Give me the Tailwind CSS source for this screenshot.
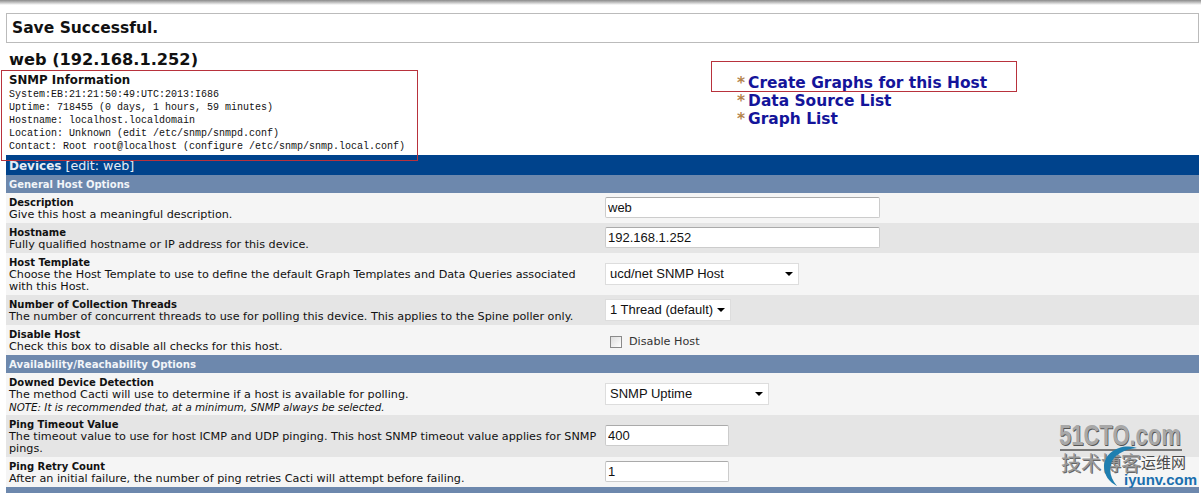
<!DOCTYPE html>
<html lang="en">
<head>
  <meta charset="UTF-8" />
  <title>Devices - Cacti</title>
  <script src="https://cdn.jsdelivr.net/npm/@tailwindcss/browser@4"></script>
</head>
<body class="relative h-[493px] w-[1201px] overflow-hidden bg-white font-['DejaVu_Sans',sans-serif] text-[11.2px] leading-[12px] text-[#111]">
  <div class="h-[5px] bg-gradient-to-b from-[#8a8a8a] to-white"></div>

  <div class="mx-[6px] mt-[8px] mr-[2px] flex h-[30px] items-center border border-[#bbb] pl-[5px] text-[15.5px] font-bold">Save Successful.</div>

  <!-- host info + links -->
  <div class="ml-[9px] flex h-[112px]">
    <div class="w-[728px]">
      <h1 class="mt-[6px] text-[16.2px] leading-[22px] font-bold">web (192.168.1.252)</h1>
      <h2 class="mt-[2px] text-[11.8px] leading-[14px] font-bold">SNMP Information</h2>
      <div class="mt-[1px] font-['Liberation_Mono',monospace] text-[10px] leading-[13px]">
        <p>System:EB:21:21:50:49:UTC:2013:I686</p>
        <p>Uptime: 718455 (0 days, 1 hours, 59 minutes)</p>
        <p>Hostname: localhost.localdomain</p>
        <p>Location: Unknown (edit /etc/snmp/snmpd.conf)</p>
        <p>Contact: Root root@localhost (configure /etc/snmp/snmp.local.conf)</p>
      </div>
    </div>
    <ul class="mt-[31px] text-[15.45px] leading-[18px] font-bold text-[#14149a]">
      <li><span class="mr-[3px] text-[#b5844c]">*</span>Create Graphs for this Host</li>
      <li><span class="mr-[3px] text-[#b5844c]">*</span>Data Source List</li>
      <li><span class="mr-[3px] text-[#b5844c]">*</span>Graph List</li>
    </ul>
  </div>

  <div class="ml-[6px] mr-[2px]">
    <div class="flex h-[20px] items-center bg-[#00438c] pt-[1px] pl-[3px] text-[12.7px] text-[#e5ecf5]"><b class="text-[12px]">Devices</b>&nbsp;[edit: web]</div>
    <div class="flex h-[18px] items-center bg-[#6d88ad] pt-[1px] pl-[3px] text-[10px] font-bold text-[#f2f5f9]">General Host Options</div>

    <div class="grid h-[30px] grid-cols-[596px_1fr] bg-[#f5f5f5] pl-[3px] pt-[4px]">
      <div><b class="block text-[10px]">Description</b>Give this host a meaningful description.</div>
      <input value="web" class="h-[21px] w-[275px] rounded-[2px] border border-[#ccc] border-t-[#aaa] bg-white pl-[2px] font-['Liberation_Sans',sans-serif] text-[13px]" />
    </div>
    <div class="grid h-[30px] grid-cols-[596px_1fr] bg-[#e5e5e5] pl-[3px] pt-[4px]">
      <div><b class="block text-[10px]">Hostname</b>Fully qualified hostname or IP address for this device.</div>
      <input value="192.168.1.252" class="h-[21px] w-[275px] rounded-[2px] border border-[#ccc] border-t-[#aaa] bg-white pl-[2px] font-['Liberation_Sans',sans-serif] text-[13px]" />
    </div>
    <div class="grid h-[42px] grid-cols-[596px_1fr] items-start bg-[#f5f5f5] pl-[3px] pt-[4px]">
      <div class="pr-[4px]"><b class="block text-[10px]">Host Template</b>Choose the Host Template to use to define the default Graph Templates and Data Queries associated with this Host.</div>
      <div class="mt-[6px] flex h-[22px] w-[194px] items-center justify-between border border-[#ddd] bg-white pr-[5px] pl-[4px] font-['Liberation_Sans',sans-serif] text-[13px]">ucd/net SNMP Host<span class="h-0 w-0 border-x-[4px] border-t-[4px] border-x-transparent border-t-black"></span></div>
    </div>
    <div class="grid h-[30px] grid-cols-[596px_1fr] items-start bg-[#e5e5e5] pl-[3px] pt-[4px]">
      <div><b class="block text-[10px]">Number of Collection Threads</b>The number of concurrent threads to use for polling this device. This applies to the Spine poller only.</div>
      <div class="flex h-[22px] w-[126px] items-center justify-between border border-[#ddd] bg-white pr-[5px] pl-[4px] font-['Liberation_Sans',sans-serif] text-[13px]">1 Thread (default)<span class="h-0 w-0 border-x-[4px] border-t-[4px] border-x-transparent border-t-black"></span></div>
    </div>
    <div class="grid h-[30px] grid-cols-[596px_1fr] items-start bg-[#f5f5f5] pl-[3px] pt-[4px]">
      <div><b class="block text-[10px]">Disable Host</b>Check this box to disable all checks for this host.</div>
      <label class="mt-[7px] ml-[5px] flex items-center gap-[7px] text-[#333]"><span class="h-[12px] w-[12px] border border-[#8a8a8a] bg-gradient-to-br from-[#ddd] to-white"></span>Disable Host</label>
    </div>

    <div class="flex h-[18px] items-center bg-[#6d88ad] pt-[1px] pl-[3px] text-[10.2px] font-bold text-[#f2f5f9]">Availability/Reachability Options</div>

    <div class="grid h-[42px] grid-cols-[596px_1fr] items-start bg-[#f5f5f5] pl-[3px] pt-[4px]">
      <div><b class="block text-[10px]">Downed Device Detection</b>The method Cacti will use to determine if a host is available for polling.<br /><i class="text-[10.3px]">NOTE: It is recommended that, at a minimum, SNMP always be selected.</i></div>
      <div class="mt-[6px] flex h-[22px] w-[164px] items-center justify-between border border-[#ddd] bg-white pr-[5px] pl-[4px] font-['Liberation_Sans',sans-serif] text-[13px]">SNMP Uptime<span class="h-0 w-0 border-x-[4px] border-t-[4px] border-x-transparent border-t-black"></span></div>
    </div>
    <div class="grid h-[42px] grid-cols-[596px_1fr] items-start bg-[#e5e5e5] pl-[3px] pt-[4px]">
      <div><b class="block text-[10px]">Ping Timeout Value</b>The timeout value to use for host ICMP and UDP pinging. This host SNMP timeout value applies for SNMP pings.</div>
      <input value="400" class="mt-[6px] h-[21px] w-[124px] rounded-[2px] border border-[#ccc] border-t-[#aaa] bg-white pl-[2px] font-['Liberation_Sans',sans-serif] text-[13px]" />
    </div>
    <div class="grid h-[30px] grid-cols-[596px_1fr] items-start bg-[#f5f5f5] pl-[3px] pt-[4px]">
      <div><b class="block text-[10px]">Ping Retry Count</b>After an initial failure, the number of ping retries Cacti will attempt before failing.</div>
      <input value="1" class="h-[21px] w-[124px] rounded-[2px] border border-[#ccc] border-t-[#aaa] bg-white pl-[2px] font-['Liberation_Sans',sans-serif] text-[13px]" />
    </div>
    <div class="h-[6px] bg-[#6d88ad]"></div>
  </div>

  <!-- red annotation boxes drawn over the screenshot -->
  <div class="absolute top-[70px] left-[1px] h-[91px] w-[417px] border border-[#b8323c]"></div>
  <div class="absolute top-[61px] left-[711px] h-[31px] w-[306px] border border-[#b8323c]"></div>

  <!-- watermark -->
  <div class="absolute top-[420px] left-[1059px] origin-left scale-x-[0.733] font-['Liberation_Sans',sans-serif] text-[30px] leading-[30px] font-bold text-[#a8a8a8] [text-shadow:1px_1px_0_#555]">51CTO.com</div>
  <div class="absolute top-[449px] left-[1060px] h-[2px] w-[122px] bg-[#777]"></div>
  <div class="absolute top-[453px] left-[1061px] font-['Noto_Sans_CJK_SC',sans-serif] text-[20px] leading-[20px] text-[#999] [text-shadow:1px_1px_0_#666]">技术博客</div>
  <div class="absolute top-[454px] left-[1141px] font-['Noto_Sans_CJK_SC',sans-serif] text-[15px] leading-[15px] text-[#4a4a4a]">运维网</div>
  <svg class="absolute top-[444px] left-[1101px]" width="40" height="44" viewBox="0 0 40 44"><path d="M36 4C20 -1 4 8 3 22C3 31 8 38 16 42C10 35 8 28 10 20C12 12 22 5 36 4Z" fill="#1f7fb0" /></svg>
  <div class="absolute top-[473px] left-[1124px] font-['Liberation_Sans',sans-serif] text-[15px] leading-[14px] font-bold text-[#1a6fae]">iyunv.com</div>
</body>
</html>
